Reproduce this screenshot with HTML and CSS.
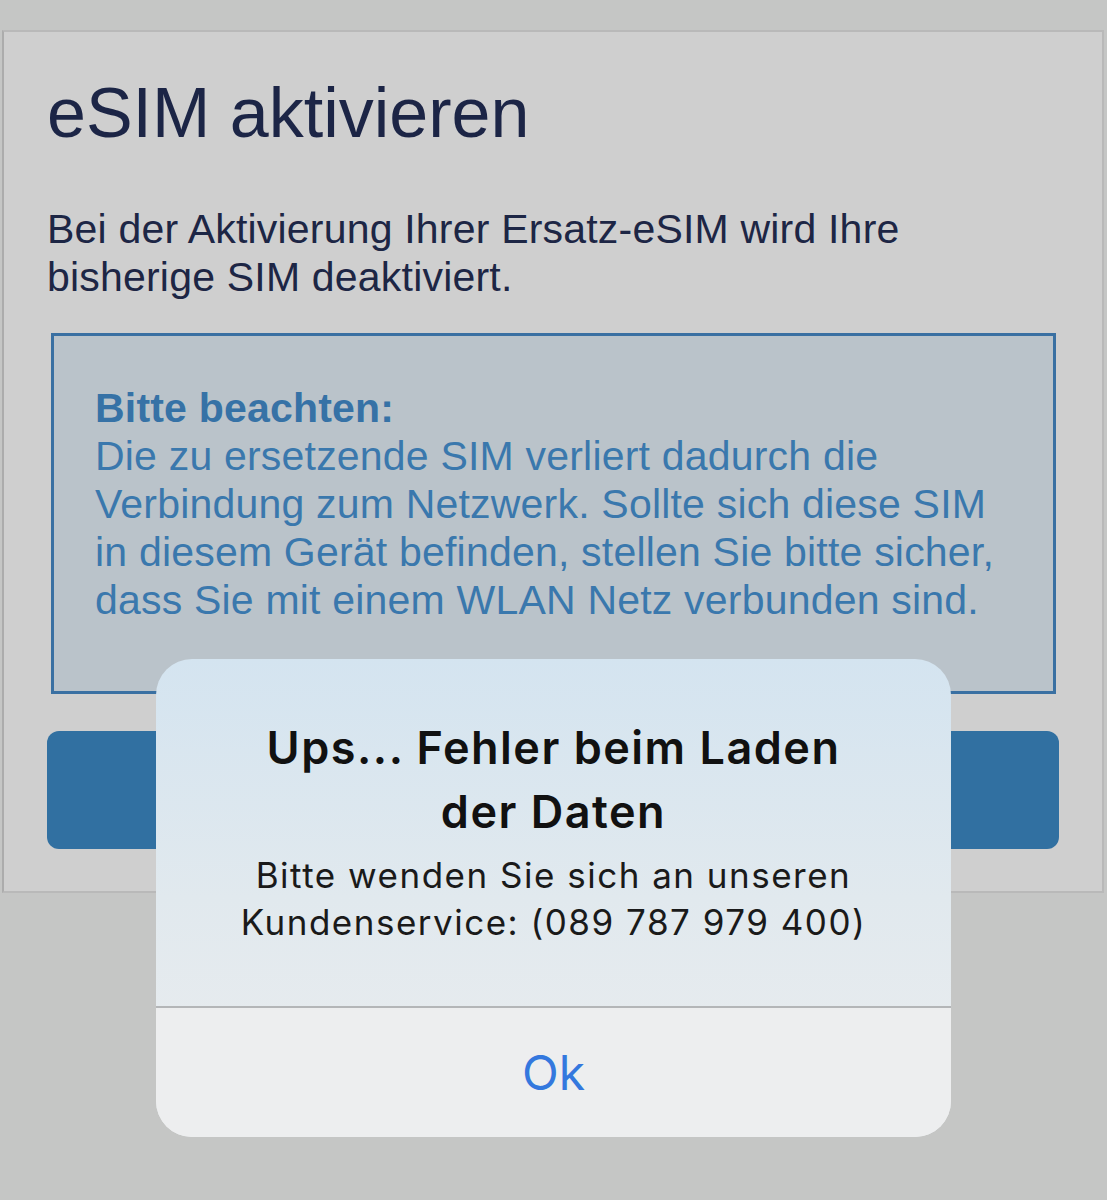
FILE: index.html
```html
<!DOCTYPE html>
<html lang="de">
<head>
    <meta charset="UTF-8">
    <meta name="viewport" content="width=device-width, initial-scale=1.0">
    <title>eSIM aktivieren</title>
    <link rel="stylesheet" href="styles.css">
</head>
<body>
    <div class="esim-card">
        <h1>eSIM aktivieren</h1>

        <p class="intro">Bei der Aktivierung Ihrer Ersatz-eSIM wird Ihre bisherige SIM deaktiviert.</p>

        <div class="notice">
            <strong>Bitte beachten:</strong><br>
            Die zu ersetzende SIM verliert dadurch die Verbindung zum Netzwerk. Sollte sich diese SIM in diesem Gerät befinden, stellen Sie bitte sicher, dass Sie mit einem WLAN Netz verbunden sind.
        </div>

        <button class="activate-btn" type="button"></button>
    </div>

    <!-- Fehlerdialog -->
    <div class="alert">
        <div class="alert-body">
            <h2 class="alert-title">Ups... Fehler beim Laden der Daten</h2>
            <p class="alert-message">Bitte wenden Sie sich an unseren Kundenservice: (089 787 979 400)</p>
        </div>
        <button class="alert-btn" type="button">Ok</button>
    </div>
</body>
</html>
```

FILE: styles.css
```css
body {
    margin: 0;
    padding-top: 30px;
    min-height: 1200px;
    box-sizing: border-box;
    background-color: #c5c6c5;
    font-family: 'Liberation Sans', Arial, sans-serif;
    position: relative;
}

.esim-card {
    margin: 0 3px 0 2px;
    padding: 41px 43px 42px 43px;
    background-color: #cfcfcf;
    border: 2px solid #b9b9b9;
    border-left-color: #acacac;
}

h1 {
    margin: 0;
    font-size: 70px;
    font-weight: normal;
    line-height: 80px;
    color: #1c2546;
}

.intro {
    margin: 52px 0 0 0;
    font-size: 41px;
    line-height: 48px;
    letter-spacing: 0.2px;
    color: #1d2645;
}

.notice {
    margin: 32px 3px 0 4px;
    padding: 48px 37px 67px 41px;
    background-color: #bac3ca;
    border: 3px solid #3a70a2;
    font-size: 41px;
    line-height: 48px;
    letter-spacing: 0.2px;
    color: #3a78ad;
}

.notice strong {
    color: #3672a6;
}

.activate-btn {
    display: block;
    width: 100%;
    height: 118px;
    margin-top: 37px;
    border: none;
    border-radius: 12px;
    background-color: #3170a1;
}

.alert {
    position: absolute;
    left: 156px;
    top: 659px;
    width: 795px;
    border-radius: 36px;
    overflow: hidden;
    background: linear-gradient(to bottom, #d4e4f0 0%, #e1e9ee 50%, #ebedef 100%);
    font-family: Inter, 'Noto Sans', sans-serif;
    text-align: center;
}

.alert-body {
    padding: 57px 70px 60px 70px;
    border-bottom: 2px solid #b4b6b8;
}

.alert-title {
    margin: 0;
    font-size: 45px;
    font-weight: 600;
    line-height: 64px;
    letter-spacing: 1.5px;
    color: #111;
}

.alert-message {
    margin: 8px -30px 0 -30px;
    font-size: 35px;
    line-height: 47px;
    letter-spacing: 1.5px;
    color: #1a1a1a;
}

.alert-btn {
    display: block;
    width: 100%;
    height: 129px;
    border: none;
    background-color: #edeeef;
    font-family: Inter, 'Noto Sans', sans-serif;
    font-size: 48px;
    color: #3478de;
}
```
